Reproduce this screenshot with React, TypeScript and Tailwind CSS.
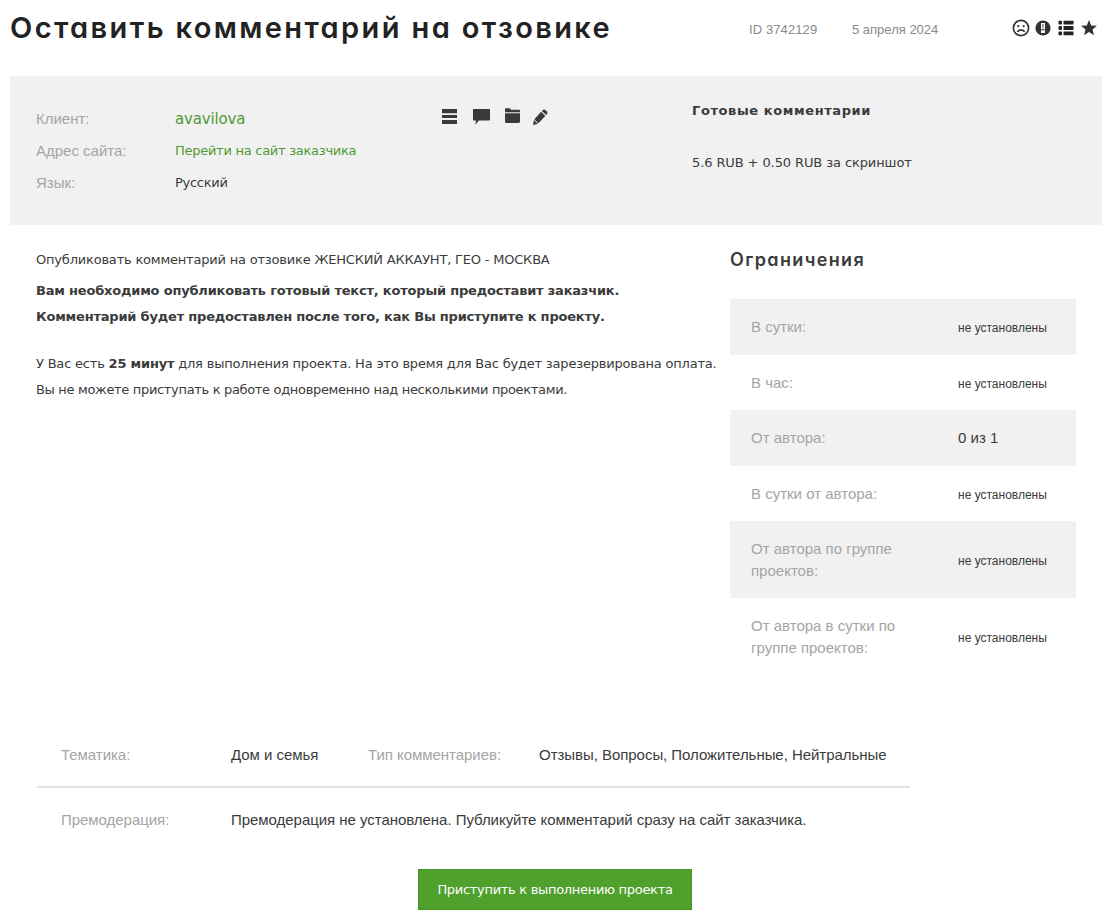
import type { ReactNode } from 'react'

// Restriction rows for the sidebar table
const limits = [
  { label: 'В сутки:', value: 'не установлены' },
  { label: 'В час:', value: 'не установлены' },
  { label: 'От автора:', value: '0 из 1', large: true },
  { label: 'В сутки от автора:', value: 'не установлены' },
  { label: 'От автора по группе проектов:', value: 'не установлены' },
  { label: 'От автора в сутки по группе проектов:', value: 'не установлены' },
]

const arial = "font-['Liberation_Sans',Arial,sans-serif]"
const verdana = "font-['DejaVu_Sans',Verdana,sans-serif]"
const display = "font-['Inter',sans-serif] [font-feature-settings:'cv11']"

function SadIcon() {
  return (
    <svg className="h-[18px] w-[18px]" viewBox="0 0 18 18" fill="none" stroke="#333" strokeWidth="1.7">
      <circle cx="9" cy="9" r="7.6" />
      <path d="M5.4 12.8C6.6 10.1 11.4 10.1 12.6 12.8" />
      <circle cx="6.3" cy="7.2" r="1.1" fill="#333" stroke="none" />
      <circle cx="11.7" cy="7.2" r="1.1" fill="#333" stroke="none" />
    </svg>
  )
}

function AlertIcon() {
  return (
    <svg className="h-4 w-4" viewBox="0 0 16 16">
      <circle cx="8" cy="8" r="7.6" fill="#333" />
      <path d="M6 3h4v6.200H6zM6 10.300h4v2.700H6z" fill="#fff" />
      <path d="M7.200 4h1.600v4.200H7.200z" fill="#888" />
    </svg>
  )
}

function ListIcon() {
  return (
    <svg className="h-4 w-4" viewBox="0 0 16 16" fill="#222">
      <rect x="0.5" y="0.8" width="3.5" height="3.8" rx="0.8" />
      <rect x="0.5" y="6.1" width="3.5" height="3.8" rx="0.8" />
      <rect x="0.5" y="11.4" width="3.5" height="3.8" rx="0.8" />
      <rect x="5.5" y="0.8" width="10" height="3.8" rx="0.5" />
      <rect x="5.5" y="6.1" width="10" height="3.8" rx="0.5" />
      <rect x="5.5" y="11.4" width="10" height="3.8" rx="0.5" />
    </svg>
  )
}

function StarIcon() {
  return (
    <svg className="h-4 w-4" viewBox="0 0 16 16" fill="#333">
      <path d="M8 0l2.200 5.500 5.700.3-4.400 3.700 1.500 5.700L8 12l-5 3.200 1.500-5.700L.1 5.800l5.700-.3z" />
    </svg>
  )
}

function RowsIcon() {
  return (
    <svg className="h-4 w-[15px]" viewBox="0 0 15 16" fill="#3a3a3a">
      <path d="M0 1h15v4H0zM0 6.900h15v3.200H0zM0 12h15v4H0z" />
      <path d="M0 5.300h15v.8H0z" fill="#bbb" />
    </svg>
  )
}

function ChatIcon() {
  return (
    <svg className="h-[17px] w-[17px]" viewBox="0 0 17 17" fill="#3a3a3a">
      <path d="M.8 1h15.400q.8 0 .8.800v10q0 .8-.8.800H6L2.200 16.800l.8-4.200H.8Q0 12.600 0 11.800v-10Q0 1 .8 1z" />
    </svg>
  )
}

function FolderIcon() {
  return (
    <svg className="h-4 w-[15px]" viewBox="0 0 15 16" fill="#3a3a3a">
      <path d="M0 4.200V1.200Q0 .2 1 .2h3.600Q5.500.2 5.800 1.800H14q1 0 1 1v1.400z" />
      <path d="M0 5.200h15v8.200q0 1.600-1.600 1.600H1.600Q0 15 0 13.400z" />
    </svg>
  )
}

function PencilIcon() {
  return (
    <svg className="h-[17px] w-[15px]" viewBox="0 0 15 17" fill="#3a3a3a">
      <path d="M9.900 1.900q1.200-1 2.400 0l1.800 1.800q.9 1.200 0 2.300l-1 1L8.900 2.900z" />
      <path d="M8.100 3.700L12.300 8l-6.900 7.200-4-4z" />
      <path d="M.9 12.200l1.500.7.3 1.400 1.500.4.300 1.200L0 17z" />
    </svg>
  )
}

function InfoRow({ label, children }: { label: string; children: ReactNode }) {
  return (
    <div className="flex h-8 items-center">
      <span className={`${arial} w-[139px] text-[15px] text-[#a5a5a5]`}>{label}</span>
      {children}
    </div>
  )
}

export default function App() {
  return (
    <div className={`${verdana} h-[923px] w-[1109px] overflow-hidden bg-white text-[13px] text-[#3b3b3b]`}>
      {/* Page title */}
      <header className="flex h-[76px] items-start pl-[10px]">
        <h1 className={`${display} mt-[10px] w-[739px] whitespace-nowrap text-[29px] leading-9 font-semibold tracking-[2.38px] text-[#222]`}>
          Оставить комментарий на отзовике
        </h1>
        <div className={`${arial} mt-5 flex text-[13px] leading-5 whitespace-nowrap text-[#8a8a8a]`}>
          <span className="w-[103px] tracking-[0.1px]">ID 3742129</span>
          <span className="w-[160px]">5 апреля 2024</span>
        </div>
        <div className="mt-[19px] flex items-center gap-[5px]">
          <SadIcon />
          <AlertIcon />
          <div className="mr-[2px] ml-[2px]"><ListIcon /></div>
          <StarIcon />
        </div>
      </header>

      {/* Client panel */}
      <section className="ml-[10px] flex h-[149px] w-[1092px] bg-[#f1f1f1] pl-[26px]">
        <div className="w-[406px] pt-[27px]">
          <InfoRow label="Клиент:">
            <a className="text-[15px] tracking-[-0.15px] text-[#4f9a35]">avavilova</a>
          </InfoRow>
          <InfoRow label="Адрес сайта:">
            <a className="tracking-[-0.27px] whitespace-nowrap text-[#4f9a35]">Перейти на сайт заказчика</a>
          </InfoRow>
          <InfoRow label="Язык:">
            <span className="tracking-[-0.27px]">Русский</span>
          </InfoRow>
        </div>
        <div className="flex w-[250px] items-start pt-8">
          <div className="w-[31px]"><RowsIcon /></div>
          <div className="w-8"><ChatIcon /></div>
          <div className="w-7"><FolderIcon /></div>
          <PencilIcon />
        </div>
        <div className="whitespace-nowrap">
          <p className="mt-[25px] leading-5 font-bold tracking-[0.6px]">Готовые комментарии</p>
          <p className="mt-8 leading-5 tracking-[-0.1px]">5.6 RUB + 0.50 RUB за скриншот</p>
        </div>
      </section>

      <div className="flex h-[498px] pl-[36px]">
        <main className="w-[694px] pt-[22px] leading-[26px] tracking-[-0.2px] whitespace-nowrap">
          <p>Опубликовать комментарий на отзовике ЖЕНСКИЙ АККАУНТ, ГЕО - МОСКВА</p>
          <p className="mt-[5px] font-bold">
            <span>Вам необходимо опубликовать готовый текст, который предоставит заказчик.</span>
            <br />
            <span>Комментарий будет предоставлен после того, как Вы приступите к проекту.</span>
          </p>
          <p className="mt-[21px]">
            <span>У Вас есть <b>25 минут</b> для выполнения проекта. На это время для Вас будет зарезервирована оплата.</span>
            <br />
            <span className="tracking-[-0.33px]">Вы не можете приступать к работе одновременно над несколькими проектами.</span>
          </p>
        </main>

        {/* Restrictions */}
        <aside className={`${arial} w-[346px]`}>
          <h2 className={`${display} mt-[22px] mb-[27px] text-[18px] leading-[25px] font-semibold tracking-[1.35px]`}>
            Ограничения
          </h2>
          {limits.map((item, index) => (
            <div
              key={item.label}
              className={`flex items-center py-[17px] pl-[21px] leading-[21.5px] ${index % 2 === 0 ? 'bg-[#f1f1f1]' : ''}`}
            >
              <div className="w-[207px] pr-[50px] text-[15px] text-[#a5a5a5]">{item.label}</div>
              <div className={item.large ? 'text-[15px]' : 'pt-[3px] text-[12px] leading-[18px]'}>{item.value}</div>
            </div>
          ))}
        </aside>
      </div>

      {/* Project details */}
      <section className={`${arial} ml-[37px] w-[873px] text-[15px] tracking-[-0.04px] whitespace-nowrap`}>
        <div className="flex h-[65px] items-center border-b-2 border-[#e2e2e2] pt-px pl-6">
          <span className="w-[170px] text-[#a5a5a5]">Тематика:</span>
          <span className="w-[137px]">Дом и семья</span>
          <span className="w-[171px] text-[#a5a5a5]">Тип комментариев:</span>
          <span>Отзывы, Вопросы, Положительные, Нейтральные</span>
        </div>
        <div className="flex h-[63px] items-center pt-px pl-6">
          <span className="w-[170px] text-[#a5a5a5]">Премодерация:</span>
          <span>Премодерация не установлена. Публикуйте комментарий сразу на сайт заказчика.</span>
        </div>
      </section>

      <button className="mt-[18px] ml-[418px] h-[41px] w-[274px] border border-[#469625] bg-[#4fa02c] text-[13px] tracking-[-0.3px] whitespace-nowrap text-white">
        Приступить к выполнению проекта
      </button>
    </div>
  )
}
